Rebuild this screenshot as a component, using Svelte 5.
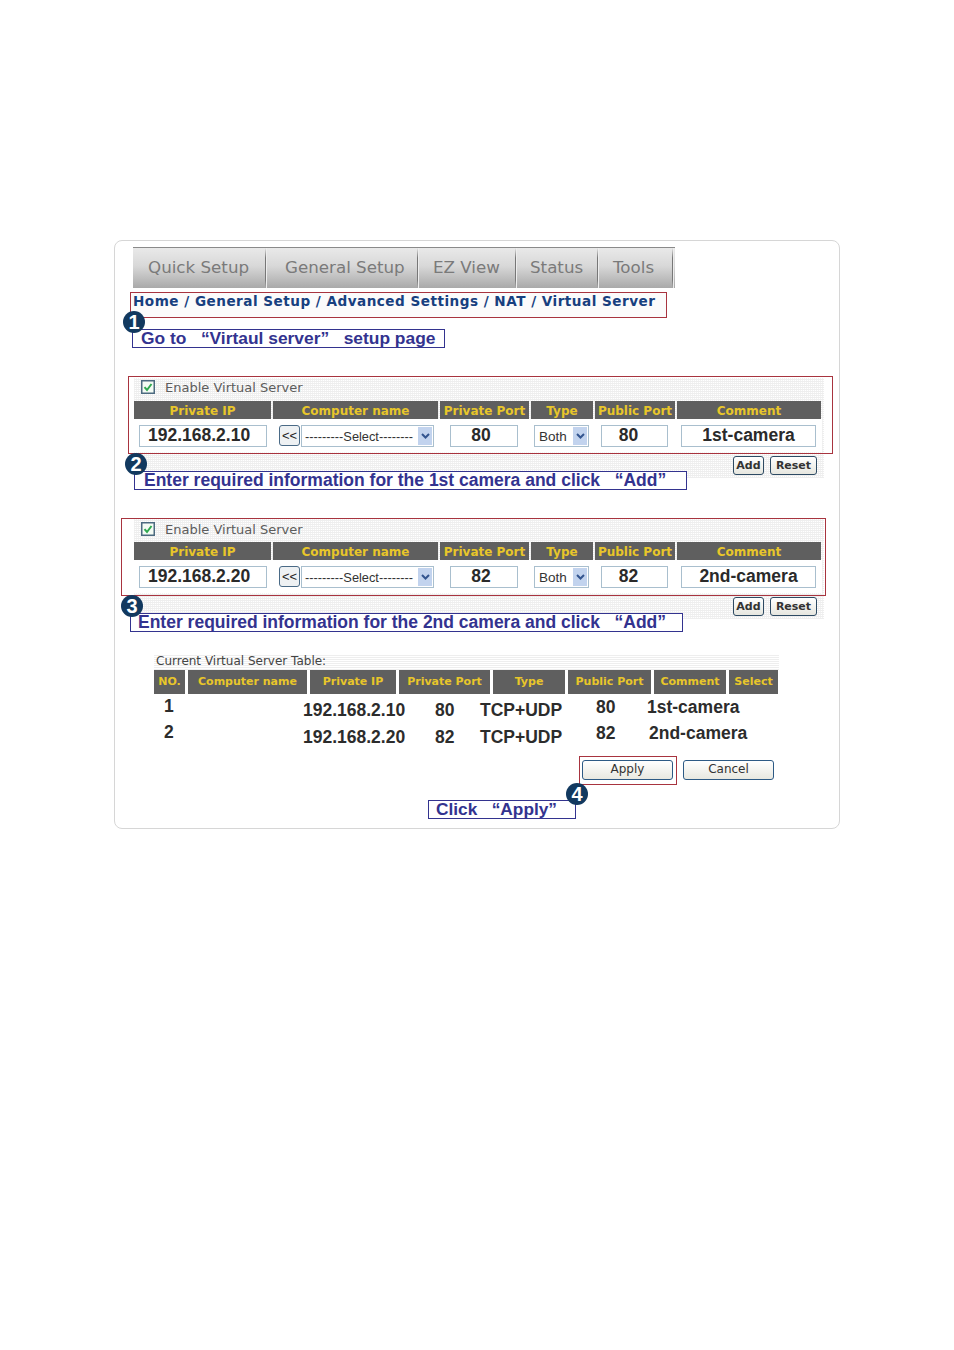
<script>
	const tabs = [
		{ label: 'Quick Setup', w: 134, pad: 15 },
		{ label: 'General Setup', w: 152, pad: 18 },
		{ label: 'EZ View', w: 98, pad: 14 },
		{ label: 'Status', w: 82, pad: 13 },
		{ label: 'Tools', w: 75, pad: 14 }
	]
	const columns = ['Private IP', 'Computer name', 'Private Port', 'Type', 'Public Port', 'Comment']
	const steps = [
		{ n: 2, cls: 'first', ip: '192.168.2.10', port: '80', comment: '1st-camera', text: 'Enter required information for the 1st camera and click \u00a0 “Add”' },
		{ n: 3, cls: 'second', ip: '192.168.2.20', port: '82', comment: '2nd-camera', text: 'Enter required information for the 2nd camera and click \u00a0 “Add”' }
	]
	const tableHead = ['NO.', 'Computer name', 'Private IP', 'Private Port', 'Type', 'Public Port', 'Comment', 'Select']
	const rows = [
		{ no: 1, ip: '192.168.2.10', priv: '80', pub: '80', comment: '1st-camera' },
		{ no: 2, ip: '192.168.2.20', priv: '82', pub: '82', comment: '2nd-camera' }
	]
</script>

<div class="page">
	<div class="card">
		<nav class="tabs">
			{#each tabs as tab}
				<div class="tab" style="width:{tab.w}px;padding-left:{tab.pad}px">{tab.label}</div>
			{/each}
		</nav>

		<div class="crumb">Home / General Setup / Advanced Settings / NAT / Virtual Server</div>
		<div class="callout go">
			<span class="badge">1</span>
			Go to &nbsp; “Virtaul server” &nbsp; setup page
		</div>

		{#each steps as step}
			<section class="step {step.cls}">
				<div class="redbox"></div>
				<div class="enable">
					<svg class="check" width="14" height="14" viewBox="0 0 14 14">
						<rect x="0.75" y="0.75" width="12.5" height="12.5" fill="#f4fbf4" stroke="#4c6a80" stroke-width="1.5" />
						<path d="M3.5 7.2 L6 10 L10.5 4" fill="none" stroke="#2fa84f" stroke-width="2" />
					</svg>
					Enable Virtual Server
				</div>
				<div class="grid heads">
					{#each columns as col}
						<div class="head">{col}</div>
					{/each}
				</div>
				<div class="grid fields">
					<div class="field ip">{step.ip}</div>
					<div class="namecell">
						<div class="back">&lt;&lt;</div>
						<div class="select">
							<span>---------Select--------</span>
							<span class="arrow"><svg width="9" height="6" viewBox="0 0 9 6"><path d="M1 1 L4.5 4.5 L8 1" fill="none" stroke="#33558f" stroke-width="2" /></svg></span>
						</div>
					</div>
					<div class="field port">{step.port}</div>
					<div class="select both">
						<span>Both</span>
						<span class="arrow"><svg width="9" height="6" viewBox="0 0 9 6"><path d="M1 1 L4.5 4.5 L8 1" fill="none" stroke="#33558f" stroke-width="2" /></svg></span>
					</div>
					<div class="field pub">{step.port}</div>
					<div class="field comment">{step.comment}</div>
				</div>
				<div class="actions">
					<div class="small add">Add</div>
					<div class="small reset">Reset</div>
				</div>
				<div class="callout need">
					<span class="badge">{step.n}</span>
					{step.text}
				</div>
			</section>
		{/each}

		<section class="list">
			<div class="title">Current Virtual Server Table:</div>
			<div class="thead">
				{#each tableHead as col}
					<div class="th">{col}</div>
				{/each}
			</div>
			{#each rows as row}
				<div class="tr row{row.no}">
					<div class="no">{row.no}</div>
					<div class="v-ip">{row.ip}</div>
					<div class="v-priv">{row.priv}</div>
					<div class="v-type">TCP+UDP</div>
					<div class="v-pub">{row.pub}</div>
					<div class="v-comment">{row.comment}</div>
				</div>
			{/each}
			<div class="buttons">
				<div class="applywrap">
					<div class="big">Apply</div>
					<span class="badge">4</span>
				</div>
				<div class="big cancel">Cancel</div>
			</div>
		</section>
		<div class="callout click">Click &nbsp; “Apply”</div>
	</div>
</div>

<style>
	:global(body) {
		background: #fff;
	}

	.page {
		width: 954px;
		height: 1350px;
		padding: 240px 0 0 114px;
		box-sizing: border-box;
		font-family: 'Liberation Sans', Arial, sans-serif;
	}

	.card {
		position: relative;
		width: 726px;
		height: 589px;
		box-sizing: border-box;
		padding: 6px 0 0 18px;
		border: 1px solid #d6d6d6;
		border-radius: 8px;
	}

	.tabs {
		display: flex;
		width: 542px;
		height: 41px;
		border-top: 1px solid #8a8a8a;
		box-sizing: border-box;
		background: linear-gradient(#e9e9e9, #d8d8d8 45%, #a9a9a9);
	}

	.tab {
		box-sizing: border-box;
		line-height: 39px;
		font-family: 'DejaVu Sans', Verdana, sans-serif;
		font-size: 16.7px;
		color: #7a7a7a;
		border-right: 1px solid #ededed;
		background: linear-gradient(transparent, #777 25%, #777 80%, transparent) right / 1px 100% no-repeat;
	}

	.crumb {
		box-sizing: border-box;
		width: 537px;
		height: 26px;
		margin: 4px 0 0 -3px;
		padding: 0 0 0 2px;
		border: 1px solid #a8343f;
		line-height: 16px;
		font-family: 'DejaVu Sans', Verdana, sans-serif;
		font-weight: bold;
		font-size: 13.6px;
		letter-spacing: 0.48px;
		white-space: nowrap;
		color: #17407f;
		background: #fbfbfb;
	}

	.callout {
		position: relative;
		box-sizing: border-box;
		height: 19px;
		line-height: 17px;
		border: 1px solid #33338f;
		background: #fff;
		font-weight: bold;
		font-size: 17.3px;
		white-space: nowrap;
		color: #33338f;
	}

	.go {
		width: 313px;
		margin: 11px 0 0 -1px;
		padding-left: 8px;
		font-size: 17.4px;
	}

	.badge {
		position: absolute;
		display: block;
		width: 22px;
		height: 22px;
		border-radius: 50%;
		background: #12395f;
		color: #fff;
		font-size: 20px;
		font-weight: bold;
		line-height: 22px;
		text-align: center;
	}

	.go .badge {
		left: -10px;
		top: -19px;
	}

	.step {
		position: relative;
		width: 690px;
		height: 100px;
		margin: 30px 0 0 1px;
		font-family: 'DejaVu Sans', Verdana, sans-serif;
		background-color: #fff;
		background-image: repeating-linear-gradient(0deg, #eee 0 1px, transparent 1px 2px), repeating-linear-gradient(90deg, #f2f2f2 0 1px, transparent 1px 2px);
	}

	.step.second {
		margin-top: 41px;
	}

	.redbox {
		position: absolute;
		top: -2px;
		left: -6px;
		width: 705px;
		height: 78px;
		box-sizing: border-box;
		border: 1px solid #a8343f;
		pointer-events: none;
	}

	.second .redbox {
		top: -1px;
		left: -13px;
	}

	.enable {
		display: flex;
		align-items: flex-start;
		box-sizing: border-box;
		height: 23px;
		padding: 2px 0 0 7px;
		gap: 10px;
		font-size: 13px;
		line-height: 15px;
		color: #5c5c5c;
	}

	.second .enable {
		padding-top: 3px;
	}

	.grid {
		display: grid;
		grid-template-columns: 137px 165px 89px 62px 80px 144px;
		gap: 2px;
		width: 688px;
	}

	.head {
		height: 18px;
		background: #5f5f5f;
		color: #e8c62a;
		font-weight: bold;
		font-size: 12px;
		line-height: 20px;
		text-align: center;
		white-space: nowrap;
	}

	.fields {
		box-sizing: border-box;
		height: 33px;
		align-items: start;
		background: #fff;
		padding-top: 6px;
		font-family: 'Liberation Sans', Arial, sans-serif;
	}

	.field {
		box-sizing: border-box;
		height: 22px;
		border: 1px solid #a9bfce;
		background: #fff;
		font-size: 17.5px;
		font-weight: bold;
		line-height: 18px;
		color: #2a2a2a;
		text-align: center;
	}

	.ip {
		width: 128px;
		margin-left: 5px;
		padding-left: 8px;
		text-align: left;
	}

	.namecell {
		display: flex;
		margin-left: 6px;
	}

	.back {
		box-sizing: border-box;
		width: 21px;
		height: 21px;
		border: 1px solid #4a6a86;
		border-radius: 3px;
		font-size: 13px;
		line-height: 19px;
		text-align: center;
		color: #222;
		background: #eef1f3;
	}

	.select {
		display: flex;
		box-sizing: border-box;
		justify-content: space-between;
		align-items: center;
		width: 133px;
		height: 22px;
		margin-left: 1px;
		padding: 0 1px 0 3px;
		border: 1px solid #a9bfce;
		background: #fff;
		font-size: 12.8px;
		color: #333;
	}

	.arrow {
		display: flex;
		align-items: center;
		justify-content: center;
		width: 14px;
		height: 18px;
		background: #c2d3ee;
	}

	.both {
		width: 55px;
		margin-left: 3px;
		padding-left: 4px;
		font-size: 13.5px;
	}

	.port {
		width: 68px;
		margin-left: 10px;
		padding-right: 6px;
	}

	.pub {
		width: 67px;
		margin-left: 6px;
		padding-right: 12px;
	}

	.comment {
		width: 135px;
		margin-left: 4px;
	}

	.actions {
		display: flex;
		justify-content: flex-end;
		gap: 6px;
		width: 683px;
		padding-top: 4px;
	}

	.small {
		box-sizing: border-box;
		height: 19px;
		border: 1px solid #2d4a63;
		border-radius: 3px;
		background: linear-gradient(#fff, #e6e6df);
		font-size: 11px;
		font-weight: bold;
		line-height: 17px;
		text-align: center;
		color: #333;
	}

	.add {
		width: 31px;
	}

	.reset {
		width: 47px;
	}

	.need {
		position: absolute;
		top: 93px;
		left: 0;
		width: 553px;
		padding-left: 9px;
		font-family: 'Liberation Sans', Arial, sans-serif;
		font-size: 17.5px;
		background: #fff;
	}

	.second .need {
		top: 94px;
		left: -4px;
		padding-left: 7px;
	}

	.need .badge {
		left: -10px;
		top: -19px;
	}

	.list {
		position: relative;
		width: 625px;
		margin: 36px 0 0 21px;
	}

	.title {
		height: 15px;
		padding-left: 2px;
		font-family: 'DejaVu Sans', Verdana, sans-serif;
		font-size: 12px;
		line-height: 12px;
		color: #444;
		background-image: repeating-linear-gradient(0deg, #eee 0 1px, transparent 1px 2px);
	}

	.thead {
		display: grid;
		grid-template-columns: 31px 119px 86px 91px 72px 83px 72px 49px;
		gap: 3px;
		height: 23px;
	}

	.th {
		background: #5f5f5f;
		color: #e8c62a;
		font-family: 'DejaVu Sans', Verdana, sans-serif;
		font-weight: bold;
		font-size: 11px;
		line-height: 24px;
		text-align: center;
		white-space: nowrap;
	}

	.tr {
		display: grid;
		grid-template-columns: 149px 132px 45px 116px 51px 1fr;
		height: 26px;
		font-size: 17.5px;
		font-weight: bold;
		line-height: 26px;
		color: #2c2c2c;
		white-space: nowrap;
	}

	.tr .no {
		padding-left: 10px;
	}

	.v-ip,
	.v-priv,
	.v-type {
		padding-top: 4px;
	}

	.row2 .v-ip,
	.row2 .v-priv,
	.row2 .v-type {
		padding-top: 5px;
	}

	.v-pub,
	.v-comment {
		padding-top: 1px;
	}

	.row2 .v-comment {
		padding-left: 2px;
	}

	.buttons {
		display: flex;
		gap: 10px;
		margin-top: 15px;
		padding-left: 428px;
	}

	.applywrap {
		position: relative;
	}

	.applywrap::after {
		content: '';
		position: absolute;
		top: -4px;
		left: -3px;
		right: -4px;
		bottom: -5px;
		border: 1px solid #a8343f;
		pointer-events: none;
	}

	.applywrap .badge {
		left: -16px;
		top: 23px;
		z-index: 1;
	}

	.big {
		box-sizing: border-box;
		width: 91px;
		height: 20px;
		border: 1px solid #2d5a85;
		border-radius: 3px;
		background: linear-gradient(#fff, #e8e8e0);
		font-family: 'DejaVu Sans', Verdana, sans-serif;
		font-size: 12px;
		line-height: 17px;
		text-align: center;
		color: #333;
	}

	.click {
		position: absolute;
		left: 313px;
		top: 559px;
		width: 148px;
		padding-left: 7px;
	}
</style>
